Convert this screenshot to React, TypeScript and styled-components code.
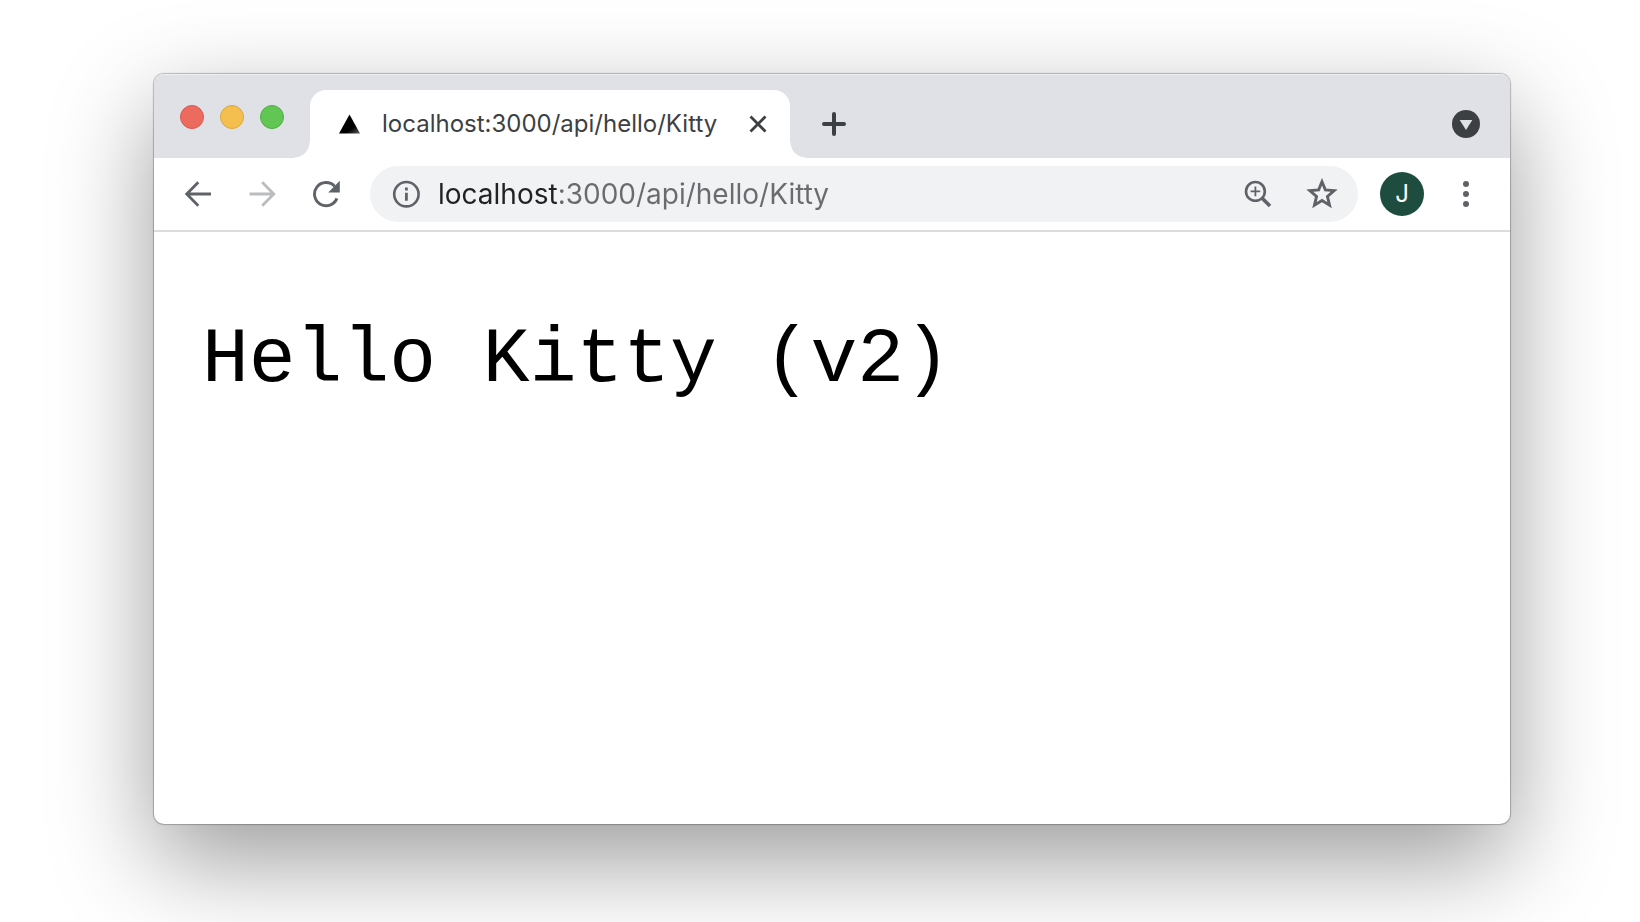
import React from "react";
import styled, { createGlobalStyle } from "styled-components";

const ui = `Inter, Roboto, "Liberation Sans", sans-serif`;

const GlobalStyle = createGlobalStyle`
  *, *::before, *::after { box-sizing: border-box; }
  body { margin: 0; background: #fff; font-family: ${ui}; }
  button, input { font: inherit; border: 0; padding: 0; background: none; }
`;

const Desktop = styled.div`
  display: flex;
  min-height: 100vh;
  padding: 74px 130px 98px 154px;
  overflow: hidden;
`;

const BrowserWindow = styled.section`
  flex: 1;
  min-width: 0;
  display: flex;
  flex-direction: column;
  border-radius: 10px;
  background: #fff;
  box-shadow: 0 0 1px 1px rgba(0, 0, 0, 0.24), 0 36px 100px rgba(0, 0, 0, 0.4);
`;

const TabStrip = styled.header`
  display: flex;
  align-items: flex-end;
  height: 84px;
  padding-right: 30px;
  border-radius: 10px 10px 0 0;
  background: #e0e1e6;
  box-shadow: inset 0 2px 0 -1px #f0f0f3;
`;

const TrafficLights = styled.div`
  display: flex;
  gap: 16px;
  padding: 0 26px 29px;
`;

const Light = styled.button<{ $fill: string; $edge: string }>`
  width: 24px;
  height: 24px;
  border: 1px solid ${(p) => p.$edge};
  border-radius: 50%;
  background: ${(p) => p.$fill};
`;

const Tab = styled.div`
  position: relative;
  display: flex;
  align-items: center;
  width: 480px;
  height: 68px;
  padding: 0 22px 0 28px;
  border-radius: 16px 16px 0 0;
  background: #fff;

  &::before,
  &::after {
    content: "";
    position: absolute;
    bottom: 0;
    width: 16px;
    height: 16px;
  }
  &::before {
    right: 100%;
    background: radial-gradient(circle at 0 0, transparent 15px, #fff 16px);
  }
  &::after {
    left: 100%;
    background: radial-gradient(circle at 100% 0, transparent 15px, #fff 16px);
  }
`;

const TabTitle = styled.span`
  flex: 1;
  margin-left: 22px;
  font-size: 24px;
  line-height: 32px;
  white-space: nowrap;
  color: #3c4043;
`;

const IconButton = styled.button<{ $size?: number; $color?: string }>`
  display: grid;
  place-items: center;
  flex: none;
  width: ${(p) => p.$size ?? 32}px;
  height: ${(p) => p.$size ?? 32}px;
  color: ${(p) => p.$color ?? "#5f6368"};

  svg { display: block; }
`;

const StripButtons = styled.div`
  flex: 1;
  display: flex;
  align-items: center;
  justify-content: space-between;
  height: 68px;
  padding-left: 28px;
`;

const Toolbar = styled.nav`
  display: flex;
  align-items: center;
  height: 74px;
  padding: 0 28px;
  border-bottom: 2px solid #dcdcde;
`;

const NavButtons = styled.div`
  display: flex;
  gap: 32px;
  margin-right: 28px;
`;

const Omnibox = styled.form`
  flex: 1;
  min-width: 0;
  display: flex;
  align-items: center;
  height: 56px;
  padding: 0 20px;
  border-radius: 28px;
  background: #f1f2f4;
`;

/* The host name is dark, the rest of the address is grey. */
const Address = styled.input`
  flex: 1;
  min-width: 0;
  height: 40px;
  margin-left: 16px;
  font-size: 28px;
  line-height: 40px;
  outline: none;
  color: transparent;
  caret-color: #202124;
  background: linear-gradient(to right, #202124 120px, #6a6b6e 120px);
  background-clip: text;
  -webkit-background-clip: text;
`;

const OmniboxActions = styled.div`
  display: flex;
  gap: 32px;
`;

const Avatar = styled.button`
  flex: none;
  width: 44px;
  height: 44px;
  margin: 0 26px 0 22px;
  border-radius: 50%;
  background: #1e4d40;
  color: #fff;
  font-size: 24px;
  line-height: 44px;
  text-align: center;
`;

const Page = styled.main`
  flex: 1;
  padding: 84px 48px;
`;

const Output = styled.pre`
  margin: 0;
  font-family: "Liberation Mono", monospace;
  font-size: 78px;
  line-height: 88px;
  color: #000;
`;

const VercelMark = () => (
  <svg width="22" height="20" viewBox="0 0 22 20" aria-hidden="true">
    <defs>
      <linearGradient id="mark" x1="0.5" y1="0.5" x2="0.9" y2="1">
        <stop offset="0.4" stopColor="#000" />
        <stop offset="1" stopColor="#555" />
      </linearGradient>
    </defs>
    <path d="M11.5 0.5 22 19.5H1Z" fill="url(#mark)" />
  </svg>
);

const CloseIcon = () => (
  <svg width="18" height="18" viewBox="0 0 18 18" fill="none" stroke="currentColor" strokeWidth="2.8">
    <path d="M1.5 1.5 16.5 16.5M16.5 1.5 1.5 16.5" />
  </svg>
);

const PlusIcon = () => (
  <svg width="24" height="24" viewBox="0 0 24 24" fill="none" stroke="currentColor" strokeWidth="4" strokeLinecap="round">
    <path d="M12 2V22M2 12H22" />
  </svg>
);

const TabSearchIcon = () => (
  <svg width="28" height="28" viewBox="0 0 28 28">
    <circle cx="14" cy="14" r="14" fill="currentColor" />
    <path d="M7.7 10H20.3L14 20Z" fill="#e0e1e6" />
  </svg>
);

const ArrowIcon = ({ forward = false }: { forward?: boolean }) => (
  <svg width="28" height="28" viewBox="0 0 28 28" fill="none" stroke="currentColor" strokeWidth="2.8">
    <path
      d={forward ? "M1.5 14H25.5M14.2 2.2 25.8 14 14.2 25.8" : "M27 14H3M14.3 2.2 2.7 14 14.3 25.8"}
    />
  </svg>
);

const ReloadIcon = () => (
  <svg width="28" height="28" viewBox="0 0 28 28">
    <path
      d="M22.6 6.2A11.6 11.6 0 1 0 24.9 18.4"
      fill="none"
      stroke="currentColor"
      strokeWidth="2.9"
    />
    <path d="M27.8 0.8V12.4H16.2Z" fill="currentColor" />
  </svg>
);

const InfoIcon = () => (
  <svg width="28" height="28" viewBox="0 0 28 28">
    <circle cx="14.4" cy="14.2" r="12.2" fill="none" stroke="currentColor" strokeWidth="2.6" />
    <path d="M13 7.6H15.8V10.4H13ZM13 12.8H15.8V20.8H13Z" fill="currentColor" />
  </svg>
);

const ZoomIcon = () => (
  <svg width="28" height="28" viewBox="0 0 28 28" fill="none" stroke="currentColor">
    <circle cx="11.4" cy="11.4" r="9.4" strokeWidth="2.6" />
    <path d="M11.4 6.6V16.2M6.6 11.4H16.2" strokeWidth="1.8" />
    <path d="M18.4 18.4 26 26" strokeWidth="3.6" />
  </svg>
);

const StarIcon = () => (
  <svg width="32" height="32" viewBox="2.2 2.2 27.6 27.6" fill="none" stroke="currentColor" strokeWidth="2.5">
    <path d="M16 5.4 18.9 12.4 26.5 13.1 20.7 18.1 22.5 25.6 16 21.6 9.5 25.6 11.3 18.1 5.5 13.1 13.1 12.4Z" />
  </svg>
);

const MenuIcon = () => (
  <svg width="28" height="28" viewBox="0 0 28 28" fill="currentColor">
    <circle cx="14" cy="4" r="3" />
    <circle cx="14" cy="14" r="3" />
    <circle cx="14" cy="24" r="3" />
  </svg>
);

export default function App() {
  return (
    <>
      <GlobalStyle />
      <Desktop>
        <BrowserWindow>
          <TabStrip>
            <TrafficLights>
              <Light $fill="#ed6a5f" $edge="#d9584e" aria-label="Close window" />
              <Light $fill="#f5bf4f" $edge="#dca73c" aria-label="Minimize window" />
              <Light $fill="#62c655" $edge="#50ad42" aria-label="Zoom window" />
            </TrafficLights>
            <Tab>
              <VercelMark />
              <TabTitle>localhost:3000/api/hello/Kitty</TabTitle>
              <IconButton $size={20} $color="#3c4043" aria-label="Close tab">
                <CloseIcon />
              </IconButton>
            </Tab>
            <StripButtons>
              <IconButton $color="#3c4043" aria-label="New tab">
                <PlusIcon />
              </IconButton>
              <IconButton $size={28} $color="#3c4043" aria-label="Search tabs">
                <TabSearchIcon />
              </IconButton>
            </StripButtons>
          </TabStrip>
          <Toolbar>
            <NavButtons>
              <IconButton aria-label="Back">
                <ArrowIcon />
              </IconButton>
              <IconButton $color="#babcbe" aria-label="Forward">
                <ArrowIcon forward />
              </IconButton>
              <IconButton aria-label="Reload">
                <ReloadIcon />
              </IconButton>
            </NavButtons>
            <Omnibox onSubmit={(e) => e.preventDefault()}>
              <IconButton type="button" aria-label="Site information">
                <InfoIcon />
              </IconButton>
              <Address type="text" aria-label="Address" spellCheck={false} defaultValue="localhost:3000/api/hello/Kitty" />
              <OmniboxActions>
                <IconButton type="button" aria-label="Zoom">
                  <ZoomIcon />
                </IconButton>
                <IconButton type="button" aria-label="Bookmark this page">
                  <StarIcon />
                </IconButton>
              </OmniboxActions>
            </Omnibox>
            <Avatar aria-label="Profile J">J</Avatar>
            <IconButton aria-label="Menu">
              <MenuIcon />
            </IconButton>
          </Toolbar>
          <Page>
            <Output>Hello Kitty (v2)</Output>
          </Page>
        </BrowserWindow>
      </Desktop>
    </>
  );
}
